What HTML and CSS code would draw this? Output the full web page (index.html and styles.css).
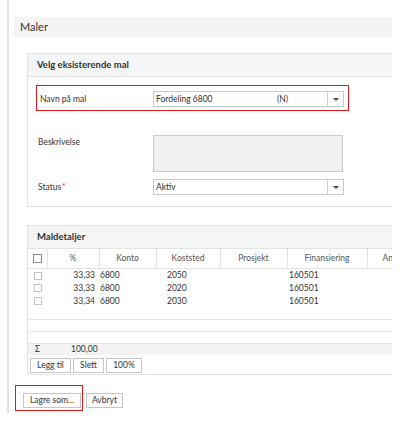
FILE: index.html
```html
<!DOCTYPE html>
<html lang="no">
<head>
<meta charset="utf-8">
<title>Maler</title>
<link rel="stylesheet" href="styles.css">
</head>
<body>
<div class="page">
  <div class="title-bar">Maler</div>

  <section class="panel panel-mal">
    <div class="panel-head">Velg eksisterende mal</div>
    <div class="panel-body">
      <div class="field highlight">
        <span class="field-label">Navn på mal</span>
        <div class="select">
          <span class="select-value">Fordeling 6800</span>
          <span class="select-extra">(N)</span>
          <span class="select-btn"><span class="caret"></span></span>
        </div>
      </div>
      <div class="field field-desc">
        <span class="field-label">Beskrivelse</span>
        <div class="textarea"></div>
      </div>
      <div class="field field-status">
        <span class="field-label">Status<span class="req">*</span></span>
        <div class="select">
          <span class="select-value">Aktiv</span>
          <span class="select-btn"><span class="caret"></span></span>
        </div>
      </div>
    </div>
  </section>

  <section class="panel panel-details">
    <div class="panel-head">Maldetaljer</div>
    <table class="grid">
      <colgroup>
        <col class="c-cb"><col class="c-pct"><col class="c-konto"><col class="c-kost"><col class="c-pro"><col class="c-fin"><col class="c-an">
      </colgroup>
      <thead>
        <tr>
          <th class="cb-cell"><span class="cb cb-head"></span></th>
          <th>%</th><th>Konto</th><th>Koststed</th><th>Prosjekt</th><th>Finansiering</th><th class="an">An</th>
        </tr>
      </thead>
      <tbody>
        <tr>
          <td class="cb-cell"><span class="cb"></span></td>
          <td class="num">33,33</td><td class="konto">6800</td><td class="kost">2050</td><td></td><td class="fin">160501</td><td></td>
        </tr>
        <tr>
          <td class="cb-cell"><span class="cb"></span></td>
          <td class="num">33,33</td><td class="konto">6800</td><td class="kost">2020</td><td></td><td class="fin">160501</td><td></td>
        </tr>
        <tr>
          <td class="cb-cell"><span class="cb"></span></td>
          <td class="num">33,34</td><td class="konto">6800</td><td class="kost">2030</td><td></td><td class="fin">160501</td><td></td>
        </tr>
        <tr class="empty"><td colspan="7"></td></tr>
        <tr class="empty"><td colspan="7"></td></tr>
        <tr class="empty"><td colspan="7"></td></tr>
      </tbody>
    </table>
    <div class="sum-row"><span class="sigma">Σ</span><span class="sum-val">100,00</span></div>
    <div class="grid-actions">
      <button class="btn btn-add">Legg til</button>
      <button class="btn btn-del">Slett</button>
      <button class="btn btn-pct">100%</button>
    </div>
  </section>

  <div class="footer-actions">
    <div class="highlight-btn"><button class="btn btn-save">Lagre som...</button></div>
    <button class="btn btn-cancel">Avbryt</button>
  </div>
</div>
</body>
</html>
```

FILE: styles.css
```css
* { box-sizing: border-box; }

html, body {
  margin: 0;
  padding: 0;
  background: #fff;
}

body {
  font-family: Lato, "Open Sans", "Liberation Sans", sans-serif;
  font-size: 8.5px;
  color: #333;
}

.page {
  margin-left: 7px;
  width: 385px;
  height: 413px;
  border-left: 2px solid #e3e3e3;
  padding: 17px 0 0 5px;
  overflow: hidden;
}

.title-bar {
  height: 20px;
  background: #f4f4f4;
  padding-left: 6px;
  font-size: 11px;
  line-height: 20px;
  color: #333;
  width: 378px;
}

.panel {
  margin-left: 13px;
  width: 420px;
  border: 1px solid #e2e2e2;
  background: #fff;
}

.panel-mal { margin-top: 16px; }
.panel-details { margin-top: 18px; }

.panel-head {
  height: 23px;
  background: #f4f5f5;
  border-bottom: 1px solid #e4e4e4;
  padding-left: 9px;
  font-size: 9.5px;
  font-weight: 700;
  line-height: 22px;
  color: #333;
}

.panel-body {
  padding: 8px 0 11px 8px;
}

.field {
  display: flex;
  align-items: center;
  width: 313px;
  padding-left: 2px;
}

.field-label {
  width: 115px;
  flex: none;
  font-size: 8.5px;
  color: #333;
}

.highlight {
  border: 1px solid #e5141b;
  height: 26px;
  padding: 2px 4px 0 3px;
}
.highlight .field-label { width: 113px; }

.field-desc {
  margin-top: 24px;
  align-items: flex-start;
}
.field-desc .field-label { padding-top: 2px; }

.field-status { margin-top: 7px; }

.req { color: #e5141b; margin-left: 1px; }

.select {
  display: flex;
  align-items: center;
  width: 191px;
  height: 16px;
  border: 1px solid #c9c9c9;
  background: #fff;
}

.select-value {
  flex: none;
  width: 123px;
  padding-left: 2px;
}

.select-extra {
  flex: 1;
}

.field-status .select-value { flex: 1; }

.select-btn {
  width: 16px;
  height: 100%;
  border-left: 1px solid #d0d0d0;
  display: flex;
  align-items: center;
  justify-content: center;
  flex: none;
}

.caret {
  width: 0;
  height: 0;
  border-left: 3px solid transparent;
  border-right: 3px solid transparent;
  border-top: 3px solid #444;
}

.textarea {
  width: 190px;
  height: 37px;
  border: 1px solid #c9c9c9;
  background: #eff1ef;
}

/* grid */
.grid {
  border-collapse: collapse;
  table-layout: fixed;
  width: 418px;
  font-size: 8.5px;
}

.c-cb { width: 19px; }
.c-pct { width: 52px; }
.c-konto { width: 57px; }
.c-kost { width: 64px; }
.c-pro { width: 67px; }
.c-fin { width: 80px; }
.c-an { width: 79px; }

.grid th {
  height: 19px;
  font-weight: 400;
  color: #555;
  text-align: center;
  border-right: 1px solid #e2e2e2;
  border-bottom: 1px solid #e2e2e2;
  padding: 0;
}

.grid th.an { text-align: left; padding-left: 15px; }

.grid td {
  height: 13px;
  padding: 0;
  line-height: 12px;
  color: #333;
}

.grid td.num { text-align: right; padding-right: 4px; }
.grid td.konto { padding-left: 1px; }
.grid td.kost { padding-left: 11px; }
.grid td.fin { padding-left: 2px; }

.grid tr.empty td {
  height: 12px;
  border-bottom: 1px solid #e6e6e6;
}

.cb-cell { text-align: center; }

.cb {
  display: inline-block;
  width: 8px;
  height: 8px;
  border: 1px solid #c4c4c4;
  background: #fff;
  vertical-align: middle;
}

.cb-head {
  width: 9px;
  height: 9px;
  border-color: #888;
}

.sum-row {
  height: 11px;
  background: #f3f3f3;
  display: flex;
  align-items: center;
  line-height: 11px;
}

.sigma { width: 43px; padding-left: 7px; }

.grid-actions {
  display: flex;
  gap: 2px;
  padding: 3px 0 1px 2px;
}

.btn {
  display: block;
  font-family: inherit;
  font-size: 8.5px;
  color: #333;
  background: #fff;
  border: 1px solid #c6c6c6;
  height: 15px;
  padding: 0;
  margin: 0;
  line-height: 13px;
  border-radius: 0;
}

.btn-add { width: 41px; }
.btn-del { width: 31px; }
.btn-pct { width: 36px; }

.footer-actions {
  display: flex;
  align-items: flex-end;
  margin-top: 10px;
  margin-left: 1px;
}

.highlight-btn {
  display: flex;
  border: 1px solid #e5141b;
  padding: 7px 1px 2px 7px;
}

.btn-save { width: 58px; }
.btn-cancel { width: 37px; margin-left: 3px; margin-bottom: 3px; }
```
